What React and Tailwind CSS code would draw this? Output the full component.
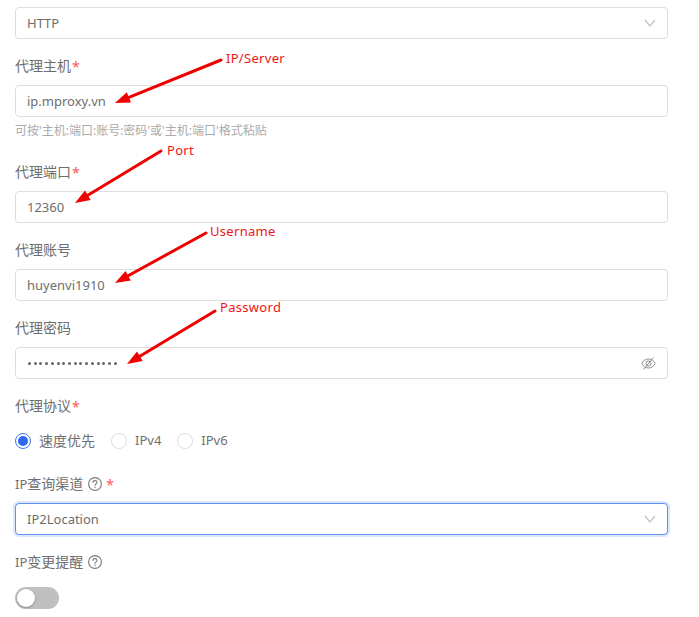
const F = "font-['Noto_Sans','Noto_Sans_CJK_SC',sans-serif]";

function Label({ children, required, help }) {
  return (
    <div className="flex items-center h-[22px] mb-2 text-sm text-[#6e6e6e]">
      <span>{children}</span>
      {help && <HelpIcon />}
      {required && <span className={`text-[#ff5558] text-sm leading-none pt-[1px] ${help ? 'ml-[4px]' : 'ml-[1px]'}`}>*</span>}
    </div>
  );
}

function HelpIcon() {
  return (
    <svg className="ml-[5px] w-[14px] h-[14px]" viewBox="0 0 14 14" fill="none" stroke="#7a7a7a" strokeWidth="1.1">
      <circle cx="7" cy="7" r="6.4" />
      <path d="M5 5.5c0-1.1.9-1.9 2-1.9s2 .8 2 1.8c0 1.4-2 1.5-2 3" strokeLinecap="round" />
      <circle cx="7" cy="10.4" r=".7" fill="#7a7a7a" stroke="none" />
    </svg>
  );
}

function Chevron() {
  return (
    <svg className="w-[12px] h-[8px]" viewBox="0 0 12 8" fill="none" stroke="#c4c4c4" strokeWidth="1.2">
      <path d="M1 1l5 6 5-6" />
    </svg>
  );
}

function Box({ children, right, focus }) {
  return (
    <div className={`flex items-center justify-between h-8 pl-[11px] pr-[11px] bg-white rounded text-[13px] text-[#6e6e6e] border ${focus ? 'border-[#5f8ff5] ring-2 ring-[#dbe6ff]' : 'border-[#dedede]'}`}>
      <span className="pt-px">{children}</span>
      {right}
    </div>
  );
}

function Radio({ checked, children }) {
  return (
    <label className="flex items-center gap-2 text-[13px] text-[#6e6e6e]">
      <span className={`flex items-center justify-center w-4 h-4 rounded-full border ${checked ? 'border-[#3f74f5]' : 'border-[#dedede]'}`}>
        {checked && <span className="w-[10px] h-[10px] rounded-full bg-[#2f66f2]" />}
      </span>
      <span className="[&_b]:font-normal [&_b]:text-sm">{children}</span>
    </label>
  );
}

function Note({ className, children }) {
  return <span className={`absolute text-[13px] leading-[18px] tracking-[0.3px] text-[#f01414] ${className}`}>{children}</span>;
}

function Arrow({ x1, y1, x2, y2 }) {
  const dx = x2 - x1, dy = y2 - y1;
  const len = Math.hypot(dx, dy);
  const ux = dx / len, uy = dy / len;
  const bx = x2 - ux * 15, by = y2 - uy * 15;
  const px = -uy * 5.5, py = ux * 5.5;
  return (
    <g>
      <line x1={x1} y1={y1} x2={bx} y2={by} stroke="#f00000" strokeWidth="3" strokeLinecap="round" />
      <polygon points={`${x2},${y2} ${bx + px},${by + py} ${bx - px},${by - py}`} fill="#f00000" />
    </g>
  );
}

export default function App() {
  return (
    <div className={`relative w-[699px] h-[617px] bg-white overflow-hidden ${F}`}>
      <div className="w-[653px] ml-[15px] pt-[7px] flex flex-col">
        <div className="mb-4"><Box right={<Chevron />}>HTTP</Box></div>
        <Label required>代理主机</Label>
        <Box>ip.mproxy.vn</Box>
        <div className="h-7 mb-4 flex items-center text-xs text-[#aaaaaa]">可按'主机:端口:账号:密码'或'主机:端口'格式粘贴</div>
        <Label required>代理端口</Label>
        <div className="mb-4"><Box>12360</Box></div>
        <Label>代理账号</Label>
        <div className="mb-4"><Box>huyenvi1910</Box></div>
        <Label>代理密码</Label>
        <div className="mb-4">
          <Box right={
            <svg className="w-[15px] h-[15px]" viewBox="0 0 15 15" fill="none" stroke="#8c8c8c" strokeWidth="1">
              <path d="M.9 7.5C2 4.8 4.5 3 7.5 3s5.5 1.8 6.6 4.5C13 10.2 10.5 12 7.5 12S2 10.2 .9 7.5z" />
              <circle cx="7.5" cy="7.5" r="2.5" />
              <path d="M2.5 13.5L12.5 1.500" />
            </svg>
          }>
            <span className="flex gap-[2.73px] items-center h-5 pl-px">
              {Array.from({ length: 16 }).map((_, i) => (
                <span key={i} className="w-[3px] h-[3px] rounded-full bg-[#666666]" />
              ))}
            </span>
          </Box>
        </div>
        <Label required>代理协议</Label>
        <div className="flex items-center gap-4 h-8 mb-4">
          <Radio checked><b>速度优先</b></Radio>
          <Radio>IPv4</Radio>
          <Radio>IPv6</Radio>
        </div>
        <Label required help><span className="text-[13px]">IP</span>查询渠道</Label>
        <div className="mb-4"><Box focus right={<Chevron />}>IP2Location</Box></div>
        <Label help><span className="text-[13px]">IP</span>变更提醒</Label>
        <div className="mt-[6px] w-11 h-[22px] rounded-full bg-[#bfbfbf] p-[2px]">
          <div className="w-[18px] h-[18px] rounded-full bg-white shadow-[0_1px_2px_rgba(0,0,0,0.3)]" />
        </div>
      </div>

      <svg className="absolute inset-0 w-[699px] h-[617px] pointer-events-none" viewBox="0 0 699 617">
        <Arrow x1={221} y1={60} x2={115} y2={103} />
        <Arrow x1={161} y1={151} x2={75} y2={203} />
        <Arrow x1={206} y1={233} x2={115} y2={283} />
        <Arrow x1={215} y1={311} x2={127} y2={364} />
      </svg>
      <Note className="left-[226px] top-[49px]">IP/Server</Note>
      <Note className="left-[167px] top-[141px]">Port</Note>
      <Note className="left-[210px] top-[222px]">Username</Note>
      <Note className="left-[220px] top-[298px]">Password</Note>
    </div>
  );
}
